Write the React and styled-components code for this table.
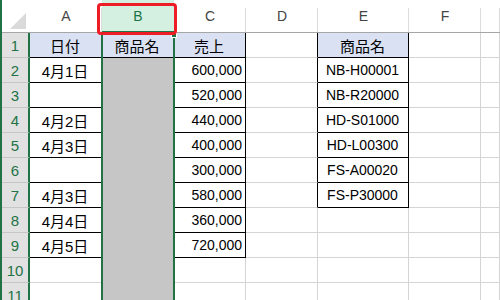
import React from "react";
import styled, { createGlobalStyle, css } from "styled-components";

const GlobalStyle = createGlobalStyle`
    html, body {
        margin: 0;
        padding: 0;
        background: #fff;
        overflow: hidden;
    }
    body {
        font-family: "Liberation Sans", "Noto Sans CJK JP", sans-serif;
    }
`;

const GREEN = "#217346";
const GRID = "#d4d4d4";
const INK = "#000";

const Sheet = styled.div`
    position: relative;
    width: 500px;
    height: 300px;
    overflow: hidden;
    box-sizing: border-box;
    border-left: 2px solid ${GREEN};
    display: grid;
    grid-template-columns: 28px 72px 72px 72px 72px 91px 72px 1fr;
    grid-template-rows: 33px;
    grid-auto-rows: 25px;
`;

const Corner = styled.div`
    box-sizing: border-box;
    background: #fff;
    border-bottom: 1px solid #a6a6a6;
    position: relative;

    svg {
        position: absolute;
        left: 0;
        top: 0;
    }
`;

const ColHead = styled.div`
    box-sizing: border-box;
    position: relative;
    display: flex;
    align-items: center;
    justify-content: center;
    font-size: 14px;
    color: #444;
    background: #fff;
    border-bottom: 1px solid #a6a6a6;

    &::after {
        content: "";
        position: absolute;
        right: 0;
        top: 8px;
        bottom: 0;
        width: 1px;
        background: #dcdcdc;
    }

    ${p => p.selected && css`
        background: #d3f0e0;
        color: ${GREEN};
        border-bottom: 2px solid ${GREEN};
        &::after { display: none; }
    `}
`;

const RowHead = styled.div`
    box-sizing: border-box;
    display: flex;
    align-items: center;
    justify-content: center;
    font-size: 15px;
    color: ${GREEN};
    background: #e1e1e1;
    border-right: 2px solid ${GREEN};
    border-bottom: 1px solid #c6c6c6;
`;

const Cell = styled.div`
    box-sizing: border-box;
    display: flex;
    align-items: center;
    justify-content: ${p => p.align === "right" ? "flex-end" : "center"};
    padding: 0 3px 0 2px;
    font-size: ${p => p.jp ? "15px" : "14px"};
    color: ${INK};
    white-space: nowrap;
    background: ${p => p.fill || "#fff"};
    border-right: 1px solid ${p => p.right};
    border-bottom: 1px solid ${p => p.bottom};
`;

const Selection = styled.div`
    position: absolute;
    left: 99px;
    top: 33px;
    bottom: 0;
    width: 74px;
    box-sizing: border-box;
    border-left: 2px solid ${GREEN};
    border-right: 2px solid ${GREEN};
    pointer-events: none;
`;

const FillHandle = styled.div`
    position: absolute;
    left: 169px;
    top: 32px;
    width: 6px;
    height: 6px;
    box-sizing: border-box;
    background: ${GREEN};
    border: 1px solid #fff;
`;

const Marker = styled.div`
    position: absolute;
    left: 95px;
    top: 3px;
    width: 80px;
    height: 32px;
    box-sizing: border-box;
    border: 3px solid #ee1c25;
    border-radius: 4px;
    pointer-events: none;
`;

const LETTERS = ["A", "B", "C", "D", "E", "F", ""];

const dates = ["4月1日", "", "4月2日", "4月3日", "", "4月3日", "4月4日", "4月5日"];
const sales = ["600,000", "520,000", "440,000", "400,000", "300,000", "580,000", "360,000", "720,000"];
const codes = ["NB-H00001", "NB-R20000", "HD-S01000", "HD-L00300", "FS-A00020", "FS-P30000"];

const ROWS = 11;

// cell text by [row][col], rows from 1
const valueAt = (r, c) => {
    if (r === 1) return ["日付", "商品名", "売上", "", "商品名", "", ""][c];
    if (r <= 9 && c === 0) return dates[r - 2];
    if (r <= 9 && c === 2) return sales[r - 2];
    if (r <= 7 && c === 4) return codes[r - 2];
    return "";
};

const boxed = (r, c) =>
    (r >= 1 && r <= 9 && c <= 2) || (r >= 1 && r <= 7 && c === 4);

const App = () => {
    const rows = [];
    for (let r = 1; r <= ROWS; r++) {
        rows.push(<RowHead key={`h${r}`}>{r}</RowHead>);
        for (let c = 0; c < LETTERS.length; c++) {
            const shaded = c === 1 && r >= 2;
            const head = r === 1 && (c <= 2 || c === 4);
            const fill = shaded ? "#c6c6c6" : head ? "#d9e1f2" : "#fff";
            const right = boxed(r, c) || boxed(r, c + 1) ? INK : GRID;
            let bottom = boxed(r, c) || boxed(r + 1, c) ? INK : GRID;
            if (shaded) bottom = fill;
            rows.push(
                <Cell
                    key={`${r}-${c}`}
                    fill={fill}
                    right={right}
                    bottom={bottom}
                    jp={r === 1 || c === 0}
                    align={c === 2 && r >= 2 ? "right" : "center"}
                >
                    {valueAt(r, c)}
                </Cell>
            );
        }
    }

    return (
        <>
            <GlobalStyle />
            <Sheet>
                <Corner>
                    <svg width="28" height="33">
                        <polygon points="24,13 24,29 8,29" fill="#dadada" />
                    </svg>
                </Corner>
                {LETTERS.map((l, i) => (
                    <ColHead key={i} selected={l === "B"}>{l}</ColHead>
                ))}
                {rows}
                <Selection />
                <FillHandle />
                <Marker />
            </Sheet>
        </>
    );
};

export default App;
